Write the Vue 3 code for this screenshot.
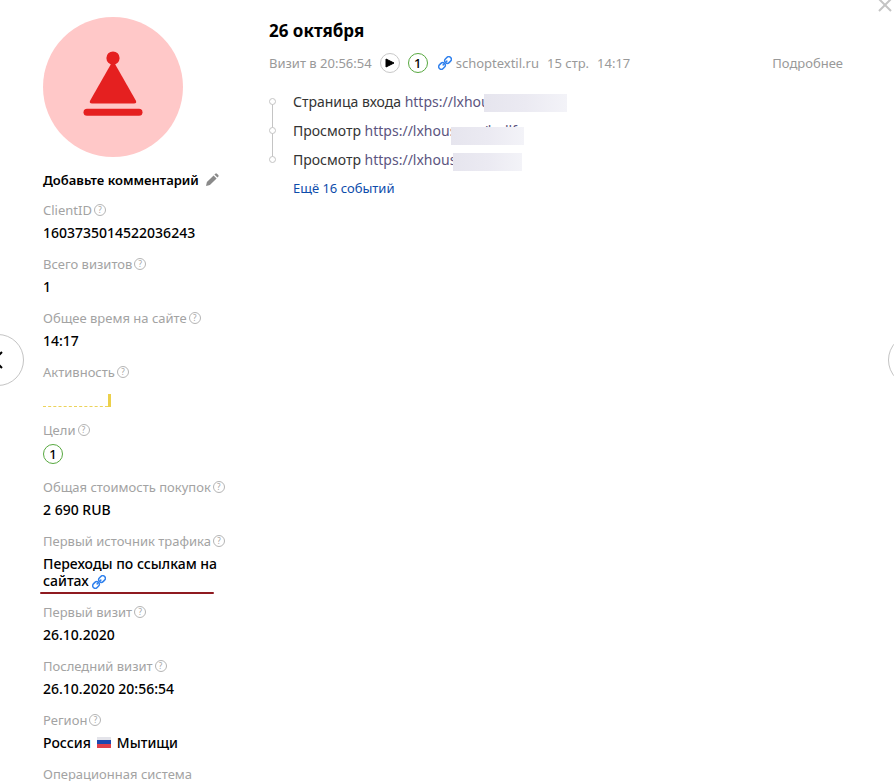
<script setup>
const fields = [
  { label: 'ClientID', value: '1603735014522036243' },
  { label: 'Всего визитов', value: '1' },
  { label: 'Общее время на сайте', value: '14:17' },
  { label: 'Активность', type: 'activity' },
  { label: 'Цели', type: 'goal', value: '1' },
  { label: 'Общая стоимость покупок', value: '2 690 RUB' },
  { label: 'Первый источник трафика', type: 'source', value: 'Переходы по ссылкам на сайтах' },
  { label: 'Первый визит', value: '26.10.2020' },
  { label: 'Последний визит', value: '26.10.2020 20:56:54' },
  { label: 'Регион', type: 'region', value: 'Россия', city: 'Мытищи' },
  { label: 'Операционная система', noHint: true },
]

const events = [
  { name: 'Страница входа', url: 'https://lxhous', mask: 'mask-entry' },
  { name: 'Просмотр', url: 'https://lxhouse.ru/bullf', mask: 'mask-middle' },
  { name: 'Просмотр', url: 'https://lxhous', mask: 'mask-last' },
]
</script>

<template>
  <div class="visitor">
    <svg class="symbols" aria-hidden="true">
      <symbol id="link-icon" viewBox="0 0 16 16">
        <g fill="none" stroke="#2f80ed" stroke-width="1.7" stroke-linecap="round" transform="rotate(-45 8 8)">
          <path d="M7 6.500A3 3 0 0 0 4.400 5H2a3 3 0 0 0 0 6h2.400A3 3 0 0 0 7 9.500" />
          <path d="M9 9.500A3 3 0 0 0 11.600 11H14a3 3 0 0 0 0-6h-2.400A3 3 0 0 0 9 6.500" />
          <path d="M5 8h6" />
        </g>
      </symbol>
    </svg>

    <aside class="profile">
      <svg class="avatar" viewBox="0 0 140 140" aria-hidden="true">
        <circle cx="70" cy="70" r="70" fill="#ffc8c8" />
        <g fill="#e52020">
          <circle cx="70" cy="41" r="6.6" />
          <path d="M68 47h4l20.800 36.500q1.400 3-1.800 3H49q-3.200 0-1.800-3z" />
          <rect x="40.500" y="91.700" width="59" height="7" rx="3.500" />
        </g>
      </svg>

      <button type="button" class="comment">
        <span>Добавьте комментарий</span>
        <svg width="14" height="14" viewBox="0 0 14 14" fill="#8a8a8a" aria-hidden="true">
          <path d="M1 13l.9-3.900 6.700-6.700 3 3-6.700 6.700zM9.400 1.600l.9-.9q.8-.7 1.600 0l1.400 1.400q.7.800 0 1.600l-.9.900z" />
        </svg>
      </button>

      <dl class="fields">
        <div v-for="field in fields" :key="field.label" class="field">
          <dt>
            {{ field.label }}
            <button v-if="!field.noHint" type="button" class="hint" :aria-label="`Справка: ${field.label}`">?</button>
          </dt>

          <dd v-if="field.type === 'activity'" class="activity">
            <span class="activity-line"></span>
            <span class="activity-bar"></span>
          </dd>
          <dd v-else-if="field.type === 'goal'">
            <span class="badge goal">{{ field.value }}</span>
          </dd>
          <dd v-else-if="field.type === 'source'" class="source">
            {{ field.value }}
            <svg class="link-icon" aria-hidden="true"><use href="#link-icon" /></svg>
          </dd>
          <dd v-else-if="field.type === 'region'" class="region">
            <span>{{ field.value }}</span>
            <svg width="14" height="11" viewBox="0 0 14 11" aria-hidden="true">
              <rect width="14" height="11" fill="#e4e4ea" />
              <rect y="3" width="14" height="5" fill="#1c49b0" />
              <rect y="7" width="14" height="4" fill="#e0404a" />
            </svg>
            <span>{{ field.city }}</span>
          </dd>
          <dd v-else-if="field.value">{{ field.value }}</dd>
        </div>
      </dl>
    </aside>

    <main class="history">
      <h1>26 октября</h1>

      <div class="visit">
        <span>Визит в 20:56:54</span>
        <button type="button" class="badge play" aria-label="Воспроизвести визит">
          <svg width="10" height="10" viewBox="0 0 10 10" aria-hidden="true">
            <path d="M1 1l8 4-8 4z" stroke="#000" stroke-linejoin="round" />
          </svg>
        </button>
        <span class="badge goal">1</span>
        <span class="referrer">
          <svg class="link-icon" aria-hidden="true"><use href="#link-icon" /></svg>
          schoptextil.ru
        </span>
        <span class="pages">15 стр.</span>
        <span class="duration">14:17</span>
        <a href="#" class="details">Подробнее</a>
      </div>

      <ul class="events">
        <li v-for="(event, index) in events" :key="index">
          {{ event.name }}
          <a href="#">{{ event.url }}</a>
          <span class="mask" :class="event.mask"></span>
        </li>
      </ul>
      <a href="#" class="more">Ещё 16 событий</a>
    </main>

    <button type="button" class="close" aria-label="Закрыть">
      <svg width="14" height="14" viewBox="0 0 14 14" stroke="#c4c4c4" stroke-width="2" aria-hidden="true">
        <path d="M1 1l12 12M13 1L1 13" />
      </svg>
    </button>
    <button type="button" class="nav prev" aria-label="Предыдущий посетитель">
      <svg width="10" height="18" viewBox="0 0 10 18" fill="none" stroke="#000" stroke-width="2" aria-hidden="true">
        <path d="M9 1L1 9l8 8" />
      </svg>
    </button>
    <button type="button" class="nav next" aria-label="Следующий посетитель"></button>
  </div>
</template>

<style>
body {
  margin: 0;
  background: #fff;
}
</style>

<style scoped>
.visitor {
  position: relative;
  display: flex;
  gap: 42px;
  box-sizing: border-box;
  height: 100vh;
  padding: 17px 51px 0 43px;
  overflow: hidden;
  font-family: "Noto Sans", "Open Sans", sans-serif;
  font-size: 13px;
  line-height: 18px;
  color: #000;
}

.symbols {
  position: absolute;
  width: 0;
  height: 0;
}

button {
  padding: 0;
  border: 0;
  background: none;
  color: inherit;
  font: inherit;
  cursor: pointer;
}

a {
  color: inherit;
  text-decoration: none;
}

.profile {
  flex: 0 0 184px;
}

.avatar {
  display: block;
  width: 140px;
  height: 140px;
}

.comment {
  display: flex;
  align-items: center;
  gap: 6px;
  margin-top: 14px;
  font-weight: 600;
  white-space: nowrap;
}

.fields {
  display: flex;
  flex-direction: column;
  gap: 14px;
  margin: 12px 0 0;
}

dt {
  display: flex;
  align-items: center;
  gap: 2px;
  color: #a3a3a3;
  white-space: nowrap;
}

.hint {
  box-sizing: border-box;
  width: 12px;
  height: 12px;
  border: 1px solid #b5b5b5;
  border-radius: 50%;
  font-size: 8px;
  line-height: 10px;
}

dd {
  margin: 5px 0 0;
  font-size: 14px;
  line-height: 17px;
  font-weight: 500;
}

.activity {
  display: flex;
  align-items: flex-end;
  height: 21px;
}

.activity-line {
  width: 65px;
  border-bottom: 1px dashed #ecd35a;
}

.activity-bar {
  width: 3px;
  height: 13px;
  background: #ecd04a;
}

.badge {
  display: grid;
  place-items: center;
  box-sizing: border-box;
  width: 20px;
  height: 20px;
  border: 1px solid #c8c8c8;
  border-radius: 50%;
  color: #000;
  font-size: 13px;
  font-weight: 500;
}

.goal {
  border-color: #57a83f;
}

.link-icon {
  width: 14px;
  height: 14px;
  overflow: visible;
}

.source {
  position: relative;
}

.source .link-icon {
  vertical-align: -3px;
}

.source::after {
  content: "";
  position: absolute;
  left: -3px;
  bottom: -5px;
  width: 174px;
  height: 2px;
  border-radius: 1px;
  background: #8f1a20;
}

.region {
  display: flex;
  align-items: center;
  gap: 6px;
}

.history {
  flex: 1;
  min-width: 0;
}

h1 {
  margin: 2px 0 0;
  font-size: 17px;
  line-height: 24px;
}

.visit {
  display: flex;
  align-items: center;
  gap: 8px;
  margin-top: 10px;
  color: #999;
  white-space: nowrap;
}

.referrer {
  display: flex;
  align-items: center;
  gap: 4px;
  margin-left: 2px;
}

.details {
  margin-left: auto;
}

.events {
  margin: 14px 0 0;
  padding: 0;
  list-style: none;
}

.events li {
  position: relative;
  padding-left: 24px;
  font-size: 14px;
  line-height: 29px;
  color: #333;
  white-space: nowrap;
}

.events li::before {
  content: "";
  position: absolute;
  top: 11px;
  left: 0;
  z-index: 1;
  box-sizing: border-box;
  width: 7px;
  height: 7px;
  border: 1px solid #c4c4c4;
  border-radius: 50%;
  background: #fff;
}

.events li:not(:last-child)::after {
  content: "";
  position: absolute;
  top: 14px;
  left: 3px;
  width: 1px;
  height: 29px;
  background: #c4c4c4;
}

.events a {
  color: #5c5580;
}

.mask {
  position: absolute;
  height: 18px;
  background: linear-gradient(90deg, #e6e5ee, #ebeaf2 50%, #f3f3f8);
}

.mask-entry {
  top: 7px;
  left: 215px;
  width: 83px;
}

.mask-middle {
  top: 11px;
  left: 182px;
  width: 73px;
}

.mask-last {
  top: 8px;
  left: 184px;
  width: 69px;
}

.more {
  margin-left: 24px;
  line-height: 28px;
  color: #0d4cab;
}

.close {
  position: absolute;
  top: -2px;
  right: 2px;
  height: 14px;
}

.close svg {
  display: block;
}

.nav {
  position: absolute;
  top: 334px;
  box-sizing: border-box;
  width: 52px;
  height: 52px;
  border: 1px solid #c4c4c4;
  border-radius: 50%;
  background: #fff;
}

.prev {
  left: -28px;
}

.prev svg {
  display: block;
  margin: 0 auto;
}

.next {
  right: -46px;
}
</style>
